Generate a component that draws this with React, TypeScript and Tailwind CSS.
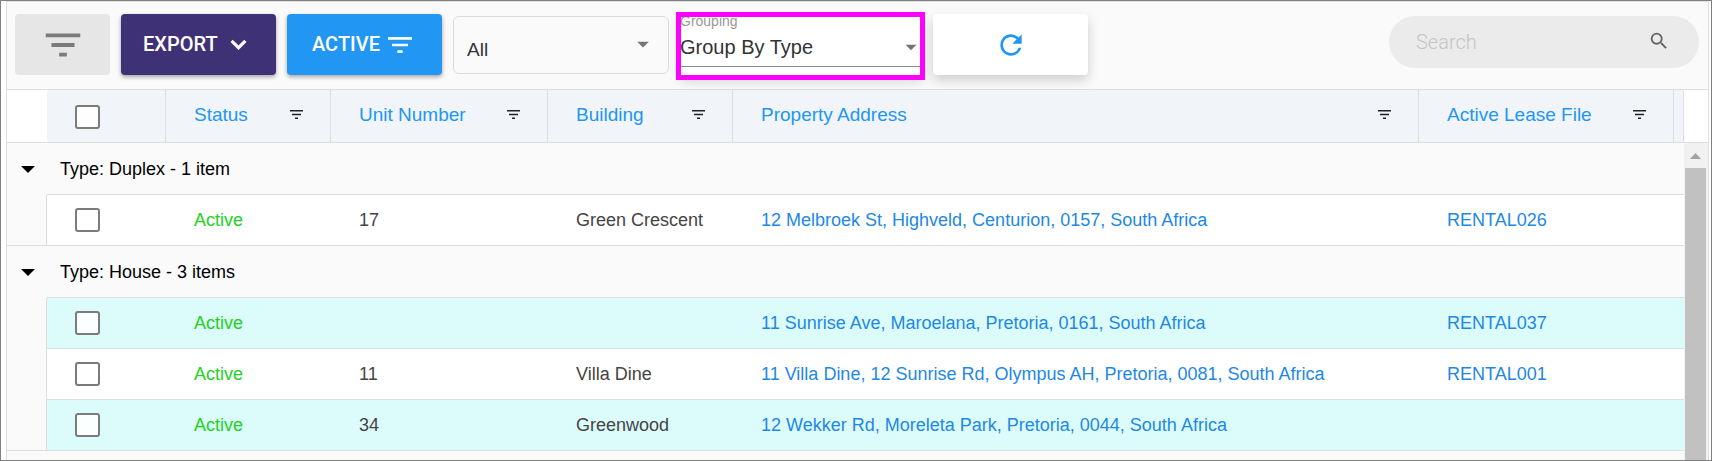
import { useState } from "react";
import { MdArrowDropDown, MdFilterList, MdRefresh, MdSearch } from "react-icons/md";

interface Unit {
  id: number;
  status: string;
  unitNumber: string;
  building: string;
  address: string;
  lease: string;
}

interface UnitGroup {
  type: string;
  units: Unit[];
}

const columns = ["Status", "Unit Number", "Building", "Property Address", "Active Lease File"];

const groups: UnitGroup[] = [
  {
    type: "Duplex",
    units: [
      {
        id: 1,
        status: "Active",
        unitNumber: "17",
        building: "Green Crescent",
        address: "12 Melbroek St, Highveld, Centurion, 0157, South Africa",
        lease: "RENTAL026",
      },
    ],
  },
  {
    type: "House",
    units: [
      {
        id: 2,
        status: "Active",
        unitNumber: "",
        building: "",
        address: "11 Sunrise Ave, Maroelana, Pretoria, 0161, South Africa",
        lease: "RENTAL037",
      },
      {
        id: 3,
        status: "Active",
        unitNumber: "11",
        building: "Villa Dine",
        address: "11 Villa Dine, 12 Sunrise Rd, Olympus AH, Pretoria, 0081, South Africa",
        lease: "RENTAL001",
      },
      {
        id: 4,
        status: "Active",
        unitNumber: "34",
        building: "Greenwood",
        address: "12 Wekker Rd, Moreleta Park, Pretoria, 0044, South Africa",
        lease: "",
      },
    ],
  },
];

function Checkbox({ label }: { label: string }) {
  return (
    <input
      type="checkbox"
      aria-label={label}
      className="block h-6 w-[25px] appearance-none rounded-[3px] border-2 border-[#7b7b7b] bg-white/90 checked:bg-[#2196f3]"
    />
  );
}

function FilterBars({ className }: { className: string }) {
  return (
    <svg viewBox="0 0 13 9" fill="currentColor" className={className} aria-hidden="true">
      <path d="M0 0h13v1.5H0zM2 3.8h9v1.5H2zM5 7.5h3V9H5z" />
    </svg>
  );
}

function Toolbar() {
  return (
    <div className="flex h-[88px] items-start border-b border-[#dedede] pt-3 pr-[9px] pl-2">
      <div className="flex gap-[11px]">
        <button
          aria-label="Clear filters"
          className="flex h-[61px] w-[95px] items-center justify-center rounded bg-[#e6e6e6] text-[#7b7b7b]"
        >
          <MdFilterList className="size-[46px]" />
        </button>
        <button className="flex h-[61px] w-[155px] items-center gap-3 rounded bg-[#3f3176] pb-0.5 pl-[22px] font-[Roboto,sans-serif] text-xl font-medium text-white shadow-[0_2px_4px_rgba(0,0,0,0.35)]">
          EXPORT
          <svg viewBox="0 0 18 12" className="mt-0.5 h-[11px] w-[17px]" fill="none" stroke="currentColor" strokeWidth="3.4" aria-hidden="true">
            <path d="M1.5 2 9 9.5 16.5 2" />
          </svg>
        </button>
        <button className="flex h-[61px] w-[155px] items-center gap-1 rounded bg-[#2196f3] pb-0.5 pl-[25px] font-[Roboto,sans-serif] text-xl font-medium text-white shadow-[0_2px_4px_rgba(0,0,0,0.35)]">
          ACTIVE
          <MdFilterList className="mt-0.5 size-8" />
        </button>
        <div className="relative mt-0.5 h-[58px] w-[216px]">
          <select
            aria-label="Status filter"
            className="h-full w-full appearance-none rounded-md border border-[#dcdcdc] bg-[#fafafa] pt-2.5 pl-[13px] text-[19px] text-[#333]"
          >
            <option>All</option>
          </select>
          <MdArrowDropDown className="pointer-events-none absolute top-3.5 right-3 size-7 text-[#757575]" />
        </div>
        <div className="relative flex h-[61px] w-[242px] flex-col bg-white shadow-[0_6px_12px_rgba(0,0,0,0.16)]">
          <label htmlFor="grouping" className="text-sm leading-[14px] text-[#999]">
            Grouping
          </label>
          <select
            id="grouping"
            className="h-[39px] w-full appearance-none border-b border-[#8c8c8c] text-xl text-[#333]"
          >
            <option>Group By Type</option>
          </select>
          <MdArrowDropDown className="pointer-events-none absolute top-5 -right-0.5 size-[26px] text-[#757575]" />
          <span className="pointer-events-none absolute -top-0.5 -right-[3px] -bottom-[5px] -left-1 border-5 border-[#ff00ff]" />
        </div>
        <button
          aria-label="Refresh"
          className="flex h-[61px] w-[155px] items-center justify-center rounded bg-white text-[#2196f3] shadow-[0_5px_12px_rgba(0,0,0,0.18)]"
        >
          <MdRefresh className="size-8" />
        </button>
      </div>
      <div className="mt-0.5 ml-auto flex h-[52px] w-[310px] items-center rounded-full bg-[#ebebeb] pr-[29px] pl-[27px]">
        <input
          type="text"
          aria-label="Search"
          placeholder="Search"
          className="min-w-0 flex-1 bg-transparent font-[Roboto,sans-serif] text-xl font-light outline-none placeholder:text-[#c4c4c4]"
        />
        <MdSearch className="mb-0.5 size-[22px] text-[#666]" />
      </div>
    </div>
  );
}

function UnitRow({ unit, striped, last }: { unit: Unit; striped: boolean; last: boolean }) {
  return (
    <tr className={`h-[51px] ${striped ? "bg-[#dcfcfb]" : "bg-white"}`}>
      <td className={`border-r border-[#dedede] bg-[#fafafa] ${last ? "border-b" : ""}`} />
      <td className="border-b border-[#dedede] pl-7">
        <Checkbox label={`Select unit ${unit.address}`} />
      </td>
      <td className="border-b border-[#dedede] pl-7 text-[#22d122]">{unit.status}</td>
      <td className="border-b border-[#dedede] pl-7">{unit.unitNumber}</td>
      <td className="border-b border-[#dedede] pl-7">{unit.building}</td>
      <td className="border-b border-[#dedede] pl-7">
        <a href="#property" className="text-[#1e88e5]">{unit.address}</a>
      </td>
      <td className="border-b border-[#dedede] pl-7">
        {unit.lease && (
          <a href="#lease" className="text-[#1e88e5]">{unit.lease}</a>
        )}
      </td>
      <td className="border-b border-[#dedede]" />
    </tr>
  );
}

export default function App() {
  const [collapsed, setCollapsed] = useState<string[]>([]);

  const toggleGroup = (type: string) => {
    setCollapsed((prev) => (prev.includes(type) ? prev.filter((t) => t !== type) : [...prev, type]));
  };

  return (
    <div className="flex min-h-screen flex-col border border-[#808080] bg-white pr-0.5 pl-[5px] font-['Liberation_Sans',Arial,sans-serif]">
      <main className="flex flex-1 flex-col border-x border-t border-[#dedede] bg-[#fafafa]">
        <Toolbar />
        <div className="flex flex-1">
          <div className="min-w-0 flex-1">
            <table className="w-full table-fixed border-separate border-spacing-0 text-lg text-[#444]">
              <colgroup>
                <col className="w-10" />
                <col className="w-[119px]" />
                <col className="w-[165px]" />
                <col className="w-[217px]" />
                <col className="w-[185px]" />
                <col />
                <col className="w-[255px]" />
                <col className="w-2.5" />
              </colgroup>
              <thead>
                <tr className="h-[53px] bg-[#f1f5fa]">
                  <th className="border-b border-[#dedede] bg-white" />
                  <th className="border-r border-b border-[#dedede] pt-0.5 pl-7">
                    <Checkbox label="Select all" />
                  </th>
                  {columns.map((column) => (
                    <th key={column} className="border-r border-b border-[#dedede] pr-[27px] pb-0.5 pl-7 font-normal">
                      <div className="flex items-center justify-between text-[19px] text-[#2196f3]">
                        {column}
                        <button aria-label={`Filter ${column}`} className="text-[#222]">
                          <FilterBars className="h-[9px] w-[13px]" />
                        </button>
                      </div>
                    </th>
                  ))}
                  <th className="border-r border-b border-[#dedede]" />
                </tr>
              </thead>
              {groups.map((group) => (
                <tbody key={group.type}>
                  <tr className="h-[52px] text-black">
                    <td className="pl-[7px]">
                      <button
                        aria-label={`Toggle ${group.type}`}
                        onClick={() => toggleGroup(group.type)}
                        className="flex w-7 justify-center"
                      >
                        <svg viewBox="0 0 14 7" fill="currentColor" className="h-[7px] w-3.5" aria-hidden="true">
                          <path d="M0 0h14L7 7z" />
                        </svg>
                      </button>
                    </td>
                    <td colSpan={7} className="border-b border-[#dedede] pl-[13px]">
                      Type: {group.type} - {group.units.length} {group.units.length === 1 ? "item" : "items"}
                    </td>
                  </tr>
                  {!collapsed.includes(group.type) &&
                    group.units.map((unit, i) => (
                      <UnitRow
                        key={unit.id}
                        unit={unit}
                        striped={group.units.length > 1 && i % 2 === 0}
                        last={i === group.units.length - 1}
                      />
                    ))}
                </tbody>
              ))}
            </table>
          </div>
          <div className="flex w-6 flex-col">
            <div className="h-[53px] border-b border-[#dedede] bg-white" />
            <div className="flex flex-1 flex-col bg-[#f1f1f1] pr-0.5 pl-px">
              <svg viewBox="0 0 11 6" fill="#a3a3a3" className="mx-auto mt-2.5 mb-[9px] h-1.5 w-[11px]" aria-hidden="true">
                <path d="M5.5 0 11 6H0z" />
              </svg>
              <div className="flex-1 bg-[#c1c1c1]" />
            </div>
          </div>
        </div>
      </main>
    </div>
  );
}
